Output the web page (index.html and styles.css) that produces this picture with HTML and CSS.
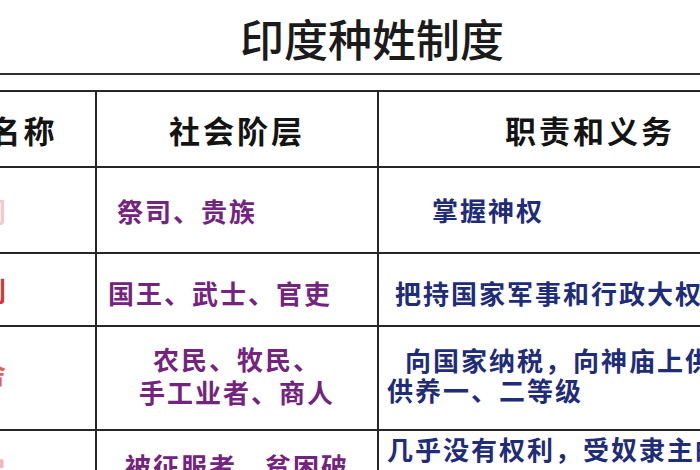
FILE: index.html
```html
<!DOCTYPE html>
<html lang="zh-CN">
<head>
<meta charset="utf-8">
<title>印度种姓制度</title>
<link rel="stylesheet" href="styles.css">
</head>
<body>
<div class="page">
  <h1 class="title">印度种姓制度</h1>
  <div class="rule"></div>
  <div class="table">
    <div class="cell head c1"><span>种姓名称</span></div>
    <div class="cell head c2"><span>社会阶层</span></div>
    <div class="cell head c3"><span>职责和义务</span></div>

    <div class="cell name n1"><span>婆罗门</span></div>
    <div class="cell rank r1"><span>祭司、贵族</span></div>
    <div class="cell duty d1"><span>掌握神权</span></div>

    <div class="cell name n2"><span>刹帝利</span></div>
    <div class="cell rank r2"><span>国王、武士、官吏</span></div>
    <div class="cell duty d2"><span>把持国家军事和行政大权</span></div>

    <div class="cell name n3"><span>吠舍</span></div>
    <div class="cell rank r3"><span>农民、牧民、<br>手工业者、商人</span></div>
    <div class="cell duty d3"><span>向国家纳税，向神庙上供奉，<br>供养一、二等级</span></div>

    <div class="cell name n4"><span>首陀罗</span></div>
    <div class="cell rank r4"><span>被征服者、贫困破<br>产者</span></div>
    <div class="cell duty d4"><span>几乎没有权利，受奴隶主的压迫</span></div>
  </div>
</div>
</body>
</html>
```

FILE: styles.css
```css
html, body {
  margin: 0;
  padding: 0;
  background: #ffffff;
}

.page {
  width: 700px;
  height: 470px;
  overflow: hidden;
  background: #ffffff;
  font-family: "Noto Sans CJK SC", "Noto Sans", sans-serif;
}

.title {
  margin: 0;
  height: 73px;
  box-sizing: border-box;
  padding: 2px 0 0 44px;
  display: flex;
  align-items: center;
  justify-content: center;
  font-size: 44px;
  font-weight: 500;
  color: #1b1b1b;
  letter-spacing: 0;
}

.rule {
  height: 0;
  border-top: 2px solid #2e2e2e;
}

.table {
  margin-top: 15px;
  margin-left: -116px;
  width: 919px;
  border-top: 2px solid #262626;
  display: grid;
  grid-template-columns: 213px 282px 424px;
  grid-template-rows: 76px 86px 73px 104px 100px;
}

.cell {
  box-sizing: border-box;
  border-right: 2px solid #262626;
  border-bottom: 2px solid #262626;
  display: flex;
  align-items: center;
  font-weight: 700;
  white-space: nowrap;
}

.cell span {
  display: block;
}

.head {
  justify-content: center;
  font-size: 31px;
  letter-spacing: 3px;
  color: #141414;
}

.name {
  justify-content: flex-end;
  padding-right: 89px;
  font-size: 26px;
  color: #d8323a;
}

.n1 {
  color: #f5c8cd;
}

.n3 {
  padding-bottom: 12px;
  color: #e0605a;
}

.n4 {
  color: #f0b4b8;
  align-items: flex-start;
  padding-top: 20px;
}

.rank {
  font-size: 26px;
  letter-spacing: 2px;
  color: #74237f;
  line-height: 33px;
}

.duty {
  font-size: 26px;
  letter-spacing: 2px;
  color: #1f2c78;
  line-height: 30px;
}

.r1 {
  padding-left: 20px;
}

.r2 {
  padding-left: 11px;
  padding-top: 6px;
}

.r3 {
  justify-content: center;
  text-align: center;
  padding-bottom: 6px;
}

.r4 {
  justify-content: center;
  text-align: center;
  align-items: flex-start;
  padding-top: 18px;
}

.d1 {
  padding-left: 53px;
}

.d2 {
  padding-left: 16px;
  padding-top: 6px;
}

.d3 {
  padding-left: 8px;
  padding-bottom: 6px;
}

.d3 span {
  text-indent: 18px;
}

.d4 {
  align-items: flex-start;
  padding-left: 8px;
  padding-top: 3px;
}
```
